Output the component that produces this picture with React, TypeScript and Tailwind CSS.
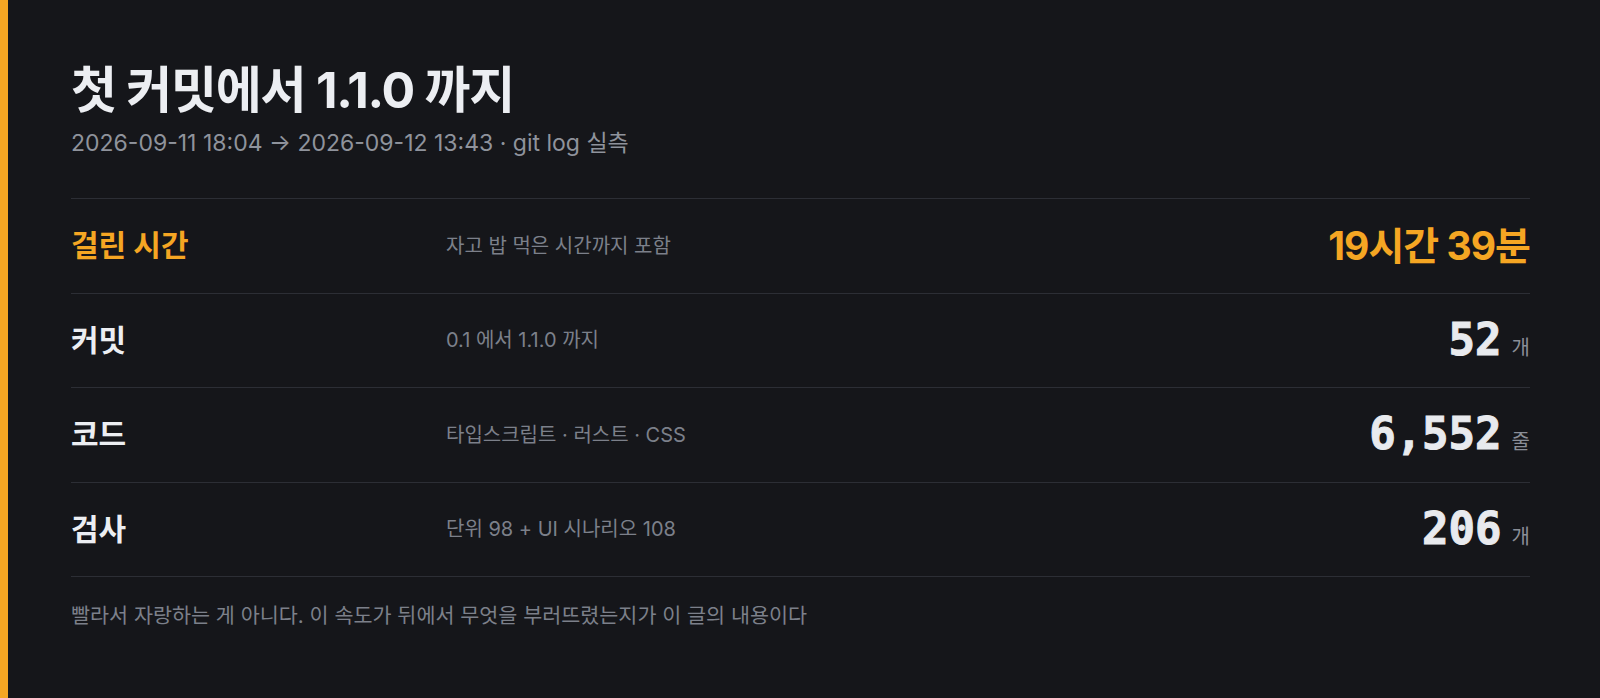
const rows = [
  { label: '커밋', desc: '0.1 에서 1.1.0 까지', value: '52', unit: '개' },
  { label: '코드', desc: '타입스크립트 · 러스트 · CSS', value: '6,552', unit: '줄' },
  { label: '검사', desc: '단위 98 + UI 시나리오 108', value: '206', unit: '개' },
];

export default function App() {
  return (
    <div className="min-h-[698px] bg-[#15161a] border-l-8 border-[#f5a623] font-['Inter','Noto_Sans_CJK_KR',sans-serif]">
      <div className="pl-[63px] pr-[70px] pt-[60px]">
        <h1 className="text-[50px] leading-[1.2] font-bold text-[#eceef2] tracking-tight">
          첫 커밋에서 1.1.0 까지
        </h1>
        <p className="mt-[12px] text-[23px] leading-none text-[#8f939c]">
          2026-09-11 18:04 → 2026-09-12 13:43 · git log 실측
        </p>

        <div className="mt-[43px] border-b border-[#2c2e35]">
          <div className="grid grid-cols-[375px_1fr_auto] items-center h-[94.5px] border-t border-[#2c2e35]">
            <span className="text-[30px] font-bold text-[#f5a623]">걸린 시간</span>
            <span className="text-[20px] text-[#7c808a]">자고 밥 먹은 시간까지 포함</span>
            <span className="text-[39px] font-bold text-[#f5a623] tracking-tight">19시간 39분</span>
          </div>
          {rows.map((row) => (
            <div
              key={row.label}
              className="grid grid-cols-[375px_1fr_auto] items-center h-[94.5px] border-t border-[#2c2e35]"
            >
              <span className="text-[30px] font-bold text-[#eceef2]">{row.label}</span>
              <span className="text-[20px] text-[#7c808a]">{row.desc}</span>
              <span className="flex items-baseline gap-[10px]">
                <span className="font-['DejaVu_Sans_Mono',monospace] text-[44px] font-bold text-[#e8eaee] leading-none [-webkit-text-stroke:1px_#e8eaee]">
                  {row.value}
                </span>
                <span className="text-[20px] text-[#8a8e97]">{row.unit}</span>
              </span>
            </div>
          ))}
        </div>

        <p className="mt-[23px] text-[20.7px] text-[#7c808a]">
          빨라서 자랑하는 게 아니다. 이 속도가 뒤에서 무엇을 부러뜨렸는지가 이 글의 내용이다
        </p>
      </div>
    </div>
  );
}
